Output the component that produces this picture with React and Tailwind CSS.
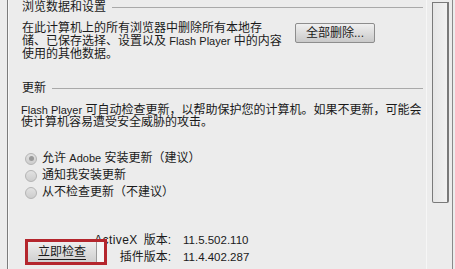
import React from "react";

const font = { fontFamily: '"Liberation Sans", "Noto Sans CJK SC", sans-serif' };

const Radio = ({ checked, children }) => (
  <div className="flex h-[17px] items-center">
    <span className="ml-[3px] flex h-[12px] w-[12px] items-center justify-center rounded-full border border-[#b4b4b4] bg-gradient-to-b from-[#e2e2e2] to-[#cdcdcd]">
      {checked && <span className="h-[5px] w-[5px] rounded-full bg-[#9a9a9a]" />}
    </span>
    <span className="ml-[5px] whitespace-nowrap">{children}</span>
  </div>
);

const GroupHeading = ({ children }) => (
  <div className="flex h-[15px] items-center">
    <span className="whitespace-nowrap pr-[6px]">{children}</span>
    <div className="h-px flex-1 bg-[#a9a9a9]" />
  </div>
);

export default function App() {
  return (
    <div
      className="relative flex h-[269px] w-[455px] overflow-hidden bg-[#ececec] text-[12px] leading-[13px] text-[#1a1a1a]"
      style={font}
    >
      {/* left frame edge */}
      <div className="w-[7px] shrink-0" />
      <div className="w-px shrink-0 bg-[#7c7c7c]" />
      <div className="w-px shrink-0 bg-[#f8f8f8]" />

      {/* content */}
      <div className="w-[414px] shrink-0 pl-[13px]">
        <GroupHeading>浏览数据和设置</GroupHeading>

        <div className="mt-[7px] flex">
          <p className="w-[273px] whitespace-nowrap">
            在此计算机上的所有浏览器中删除所有本地存
            <br />
            储、已保存选择、设置以及 <span className="text-[11px]">Flash Player</span> 中的内容
            <br />
            使用的其他数据。
          </p>
          <button className="mt-px h-[20px] w-[80px] rounded-[2px] border border-[#8d8d8d] bg-gradient-to-b from-[#f0f0f0] to-[#c9c9c9] text-[12px] leading-none text-[#1a1a1a]">
            全部删除...
          </button>
        </div>

        <div className="mt-[20px]">
          <GroupHeading>更新</GroupHeading>
        </div>

        <p className="-ml-px mt-[8px] whitespace-nowrap leading-[12px]">
          <span className="text-[11px]">Flash Player</span> 可自动检查更新，以帮助保护您的计算机。如果不更新，可能会
          <br />
          使计算机容易遭受安全威胁的攻击。
        </p>

        <div className="mt-[22px]">
          <Radio checked>
            允许 <span className="text-[11px]">Adobe</span> 安装更新（建议）
          </Radio>
          <Radio>通知我安装更新</Radio>
          <Radio>从不检查更新（不建议）</Radio>
        </div>

        <div className="mt-[31px] grid grid-cols-[149px_auto] gap-x-[12px]">
          <div className="flex h-[17px] items-center justify-end whitespace-nowrap">
            <span className="mr-[6px] tracking-[0.4px]">ActiveX</span>版本:
          </div>
          <div className="flex h-[17px] items-center text-[11.5px]">11.5.502.110</div>
          <div className="flex h-[17px] items-center justify-end whitespace-nowrap">插件版本:</div>
          <div className="flex h-[17px] items-center text-[11.5px]">11.4.402.287</div>
        </div>
      </div>

      {/* scrollbar */}
      <div className="relative flex-1">
        <div className="absolute left-[3px] top-0 h-full w-px bg-[#f6f6f6]" />
        <div className="absolute left-[9px] top-[2px] h-[201px] w-[17px] rounded-b-[2px] border-y border-l border-r-2 border-[#7a7a7a] bg-gradient-to-r from-[#e6e6e6] to-[#f2f2f2]" />
        <div className="absolute left-[29px] top-0 h-full w-px bg-[#8a8a8a]" />
      </div>

      {/* highlight around the check button */}
      <div className="absolute left-[25px] top-[239px] z-10 flex h-[26px] w-[82px] items-stretch border-[3px] border-[#b4262d] bg-[#f6f6f6]">
        <button className="w-[69px] border-r border-[#9a9a9a] bg-gradient-to-b from-[#eeeeee] to-[#cfcfcf] text-[12px] leading-none text-[#1a1a1a]">
          <span className="underline underline-offset-[3px]">立即检查</span>
        </button>
      </div>
    </div>
  );
}
